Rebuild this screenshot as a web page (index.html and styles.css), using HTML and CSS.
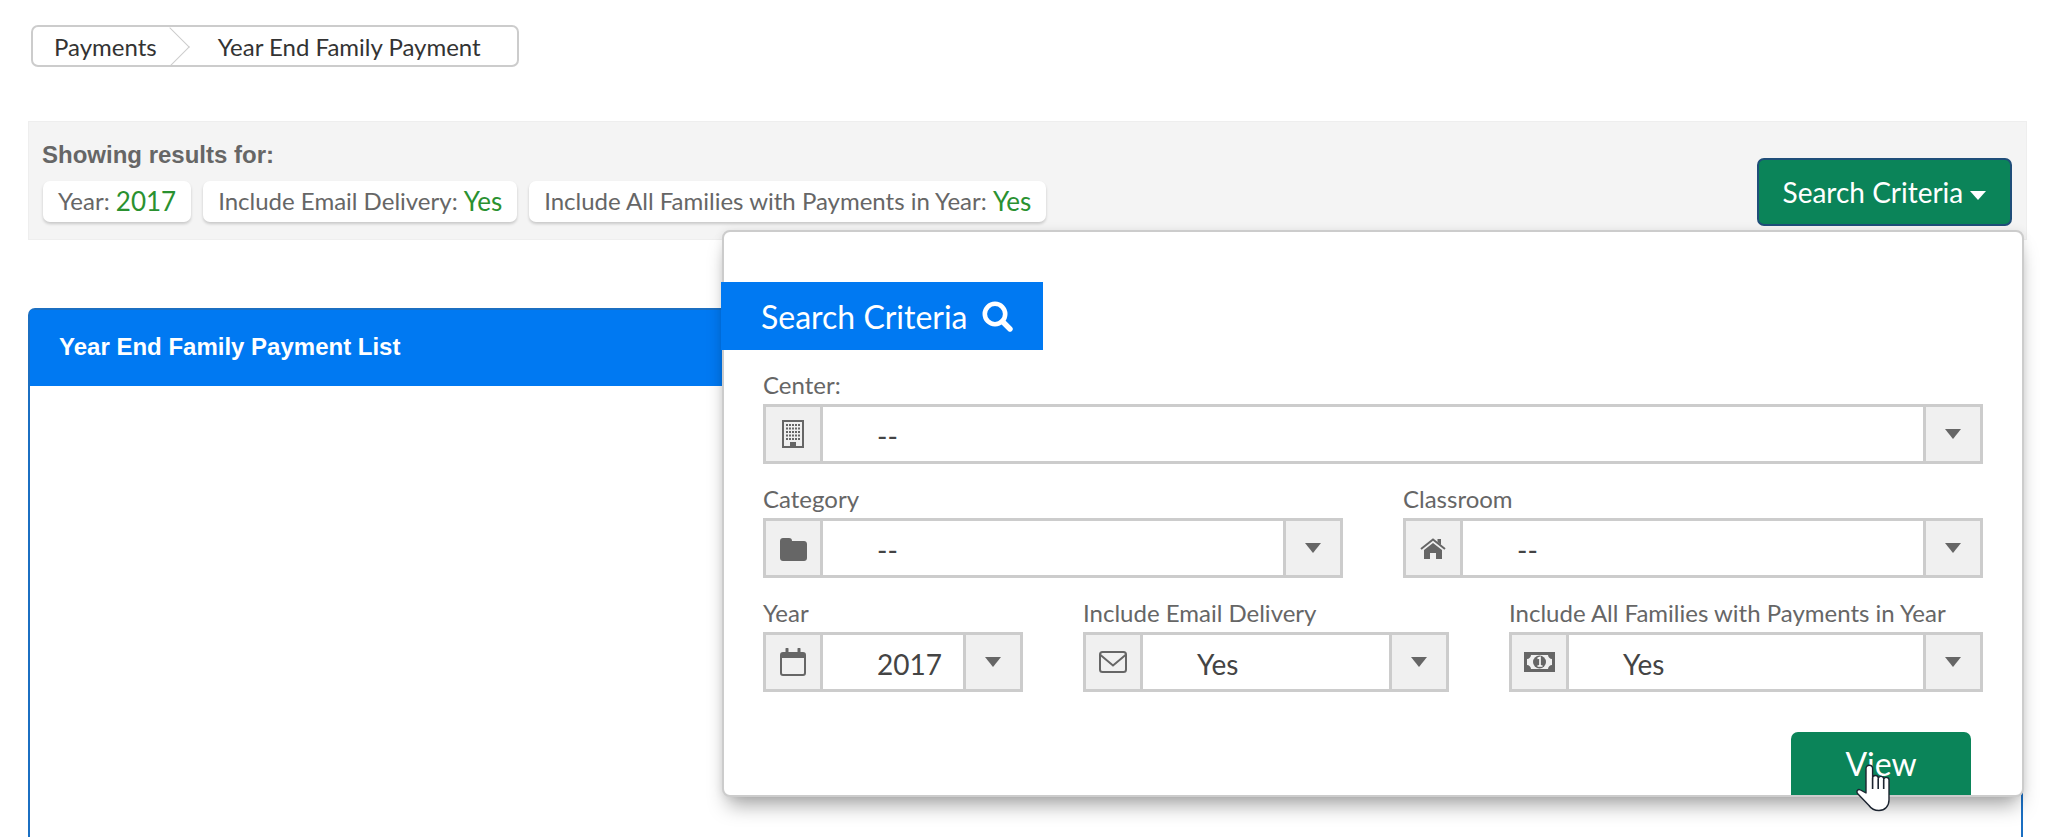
FILE: index.html
```html
<!DOCTYPE html>
<html lang="en">
<head>
    <meta charset="UTF-8">
    <title>Year End Family Payment</title>
    <link rel="stylesheet" href="styles.css">
</head>
<body>
    <div class="page">
        <div class="breadcrumb">
            <span class="crumb crumb-first">Payments</span>
            <span class="crumb">Year End Family Payment</span>
        </div>

        <div class="results-bar">
            <div class="results-left">
                <div class="results-title">Showing results for:</div>
                <div class="chips">
                    <span class="chip">Year: <b class="chip-val chip-num">2017</b></span>
                    <span class="chip">Include Email Delivery: <b class="chip-val">Yes</b></span>
                    <span class="chip">Include All Families with Payments in Year: <b class="chip-val">Yes</b></span>
                </div>
            </div>
            <button class="btn-criteria">Search Criteria <i class="caret"></i></button>

            <div class="popup">
                <div class="popup-tab">
                    <span>Search Criteria</span>
                    <svg class="search-icon" viewBox="0 0 31 31"><circle cx="13" cy="13" r="10.2" fill="none" stroke="#fff" stroke-width="4.6"/><path d="M20.5 20.5 L28 28" stroke="#fff" stroke-width="5.4" stroke-linecap="round"/></svg>
                </div>

                <div class="form-row">
                    <div class="form-group">
                        <label>Center:</label>
                        <div class="field">
                            <span class="addon">
                                <svg width="22" height="28" viewBox="0 0 22 28"><path d="M1 1h20v26H1z" fill="#f0f0f0" stroke="#666" stroke-width="2"/><path d="M4 5h14M4 8.5h14M4 12h14M4 15.500h14M4 19h14" stroke="#666" stroke-width="2" stroke-dasharray="2 1"/><path d="M8 22h6v5H8z" fill="#666"/></svg>
                            </span>
                            <span class="value">--</span>
                            <span class="arrow"><i></i></span>
                        </div>
                    </div>
                </div>

                <div class="form-row row-two">
                    <div class="form-group">
                        <label>Category</label>
                        <div class="field">
                            <span class="addon">
                                <svg class="folder" width="27" height="23" viewBox="0 0 27 23"><path d="M3 0h6c2 0 3 1 3 3h12c1.700 0 3 1.300 3 3v14c0 1.700-1.300 3-3 3H3c-1.700 0-3-1.300-3-3V3c0-1.700 1.300-3 3-3z" fill="#666"/></svg>
                            </span>
                            <span class="value">--</span>
                            <span class="arrow"><i></i></span>
                        </div>
                    </div>
                    <div class="form-group">
                        <label>Classroom</label>
                        <div class="field">
                            <span class="addon">
                                <svg width="26" height="21" viewBox="0 0 26 21"><path d="M1 11 13 1.500 25 11" fill="none" stroke="#666" stroke-width="2"/><path d="M17.500 1H21v6l-3.500-3z" fill="#666"/><path d="M13 5 22 12v9h-6v-6h-6v6H4v-9z" fill="#666"/></svg>
                            </span>
                            <span class="value">--</span>
                            <span class="arrow"><i></i></span>
                        </div>
                    </div>
                </div>

                <div class="form-row row-three">
                    <div class="form-group">
                        <label>Year</label>
                        <div class="field">
                            <span class="addon">
                                <svg width="26" height="28" viewBox="0 0 26 28"><rect x="1" y="5" width="24" height="22" rx="2" fill="none" stroke="#666" stroke-width="2"/><path d="M1 5h24v5H1z" fill="#666"/><path d="M7 1v6M19 1v6" stroke="#666" stroke-width="3" stroke-linecap="round"/></svg>
                            </span>
                            <span class="value">2017</span>
                            <span class="arrow"><i></i></span>
                        </div>
                    </div>
                    <div class="form-group">
                        <label>Include Email Delivery</label>
                        <div class="field">
                            <span class="addon">
                                <svg width="28" height="22" viewBox="0 0 28 22"><rect x="1" y="1" width="26" height="20" rx="2.500" fill="none" stroke="#666" stroke-width="2"/><path d="M1.500 4 14 14.500 26.500 4" fill="none" stroke="#666" stroke-width="2"/></svg>
                            </span>
                            <span class="value">Yes</span>
                            <span class="arrow"><i></i></span>
                        </div>
                    </div>
                    <div class="form-group">
                        <label>Include All Families with Payments in Year</label>
                        <div class="field">
                            <span class="addon">
                                <svg width="31" height="20" viewBox="0 0 31 20"><path fill-rule="evenodd" d="M0 0h31v20H0zM7 3c0 2-2 4-4 4v6c2 0 4 2 4 4h17c0-2 2-4 4-4V7c-2 0-4-2-4-4z" fill="#666"/><circle cx="15.500" cy="10" r="6.500" fill="#666"/><path d="M13.500 6.500 16 5.500V14M13.500 14h5" fill="none" stroke="#fff" stroke-width="1.600"/></svg>
                            </span>
                            <span class="value">Yes</span>
                            <span class="arrow"><i></i></span>
                        </div>
                    </div>
                </div>

                <div class="popup-foot">
                    <button class="btn-view">View</button>
                </div>

                <svg class="hand" width="35" height="48" viewBox="0 0 35 48"><path d="M10 29V4.500a3.300 3.300 0 0 1 6.600 0V14a2.800 2.800 0 0 1 5.600.5 2.800 2.800 0 0 1 5.500 1 2.700 2.700 0 0 1 5.300 1V36c0 6-4 10.500-10 10.500-5 0-8-2-10-5L1.500 29.500c-1.500-2.500.5-5 3-3.500z" fill="#fff" stroke="#1c2430" stroke-width="1.400" stroke-linejoin="round"/><path d="M16.600 14v11M22.200 15v10M27.700 16v9" stroke="#1c2430" stroke-width="1.600"/></svg>
            </div>
        </div>

        <div class="panel">
            <div class="panel-head">Year End Family Payment List</div>
        </div>
    </div>
</body>
</html>
```

FILE: styles.css
```css
html, body {
    height: 100%;
}
body {
    margin: 0;
    overflow: hidden;
    background: #fff;
    font-family: 'Lato', sans-serif;
    font-size: 24px;
    color: #666;
}
.page {
    padding: 25px 34px 0 28px;
}

/* breadcrumb */
.breadcrumb {
    display: flex;
    align-items: center;
    height: 42px;
    width: 488px;
    margin-left: 3px;
    box-sizing: border-box;
    border: 2px solid #ccc;
    border-radius: 7px;
    overflow: hidden;
    color: #333;
}
.crumb {
    padding-left: 34px;
    line-height: 37px;
}
.crumb-first {
    position: relative;
    padding: 0 27px 0 21px;
}
.crumb-first:after {
    content: "";
    position: absolute;
    top: 5px;
    right: 0;
    width: 27px;
    height: 27px;
    border-top: 1px solid #ccc;
    border-right: 1px solid #ccc;
    transform: rotate(45deg);
    transform-origin: center;
}

/* grey bar with the filters */
.results-bar {
    position: relative;
    display: flex;
    justify-content: space-between;
    height: 119px;
    margin-top: 54px;
    padding: 0 14px 0 13px;
    box-sizing: border-box;
    background: #f4f4f4;
    border: 1px solid #eee;
}
.results-title {
    margin-top: 18px;
    font-family: 'Liberation Sans', sans-serif;
    font-weight: bold;
    font-size: 24px;
    line-height: 30px;
}
.chips {
    display: flex;
    gap: 12px;
    margin-top: 11px;
    margin-left: 1px;
}
.chip {
    display: flex;
    align-items: center;
    height: 39px;
    padding: 0 15px 2px;
    background: #fff;
    border-radius: 7px;
    box-shadow: 0 2px 3px rgba(0, 0, 0, 0.18);
    white-space: pre;
}
.chip-val {
    font-weight: normal;
    color: #2a9130;
    font-size: 26px;
}
.chip-num {
    font-size: 26px;
}
.btn-criteria {
    align-self: flex-start;
    width: 255px;
    height: 68px;
    margin-top: 36px;
    box-sizing: border-box;
    background: #0b8459;
    border: 2px solid #1f4e79;
    border-radius: 7px;
    color: #fff;
    font-family: 'Lato', sans-serif;
    font-size: 28px;
    padding: 0;
}
.caret {
    display: inline-block;
    vertical-align: middle;
    border-top: 9px solid #fff;
    border-left: 8px solid transparent;
    border-right: 8px solid transparent;
}

/* dropdown */
.popup {
    position: absolute;
    top: 108px;
    right: 2px;
    width: 1302px;
    box-sizing: border-box;
    padding: 50px 39px 0 39px;
    background: #fff;
    border: 2px solid #ccc;
    border-radius: 8px;
    box-shadow: 0 14px 20px -6px rgba(0, 0, 0, 0.35), 0 0 10px rgba(0, 0, 0, 0.08);
    z-index: 5;
}
.popup-tab {
    display: flex;
    align-items: center;
    gap: 14px;
    width: 322px;
    height: 68px;
    margin: 0 0 20px -42px;
    padding-left: 40px;
    box-sizing: border-box;
    background: #0079f2;
    color: #fff;
    font-size: 32px;
}
.search-icon {
    width: 31px;
    height: 31px;
}
.form-row {
    display: grid;
    grid-template-columns: 1fr;
    margin-bottom: 20px;
}
.row-two {
    grid-template-columns: 580px 580px;
    column-gap: 60px;
}
.row-three {
    grid-template-columns: 260px 366px 474px;
    column-gap: 60px;
}
.form-group label {
    display: block;
    line-height: 29px;
    margin-bottom: 5px;
    white-space: nowrap;
}
.field {
    display: flex;
    align-items: stretch;
    height: 60px;
    box-sizing: border-box;
    border: 3px solid #ccc;
    background: #fff;
}
.addon {
    display: flex;
    align-items: center;
    justify-content: center;
    flex: none;
    width: 57px;
    box-sizing: border-box;
    background: #f0f0f0;
    border-right: 3px solid #ccc;
}
.folder {
    margin-top: 3px;
}
.value {
    flex: 1;
    padding: 5px 0 0 54px;
    line-height: 49px;
    font-size: 28px;
    color: #444;
}
.arrow {
    display: flex;
    align-items: center;
    justify-content: center;
    flex: none;
    width: 57px;
    box-sizing: border-box;
    background: #f0f0f0;
    border-left: 3px solid #ccc;
}
.arrow i {
    border-top: 10px solid #666;
    border-left: 8px solid transparent;
    border-right: 8px solid transparent;
}
.popup-foot {
    display: flex;
    justify-content: flex-end;
    padding: 20px 12px 0 0;
}
.btn-view {
    width: 180px;
    height: 63px;
    padding: 0;
    background: #0b8459;
    border: none;
    border-radius: 7px 7px 0 0;
    color: #fff;
    font-family: 'Lato', sans-serif;
    font-size: 32px;
}
.hand {
    position: absolute;
    left: 1132px;
    top: 532px;
}

/* list panel behind the dropdown */
.panel {
    height: 527px;
    margin: 68px 4px 0 0;
    border: 2px solid #1b6fc2;
    border-bottom: none;
    border-radius: 7px 7px 0 0;
}
.panel-head {
    height: 76px;
    padding-left: 29px;
    background: #0079f2;
    color: #fff;
    font-family: 'Liberation Sans', sans-serif;
    font-weight: bold;
    font-size: 24px;
    line-height: 74px;
}
```
